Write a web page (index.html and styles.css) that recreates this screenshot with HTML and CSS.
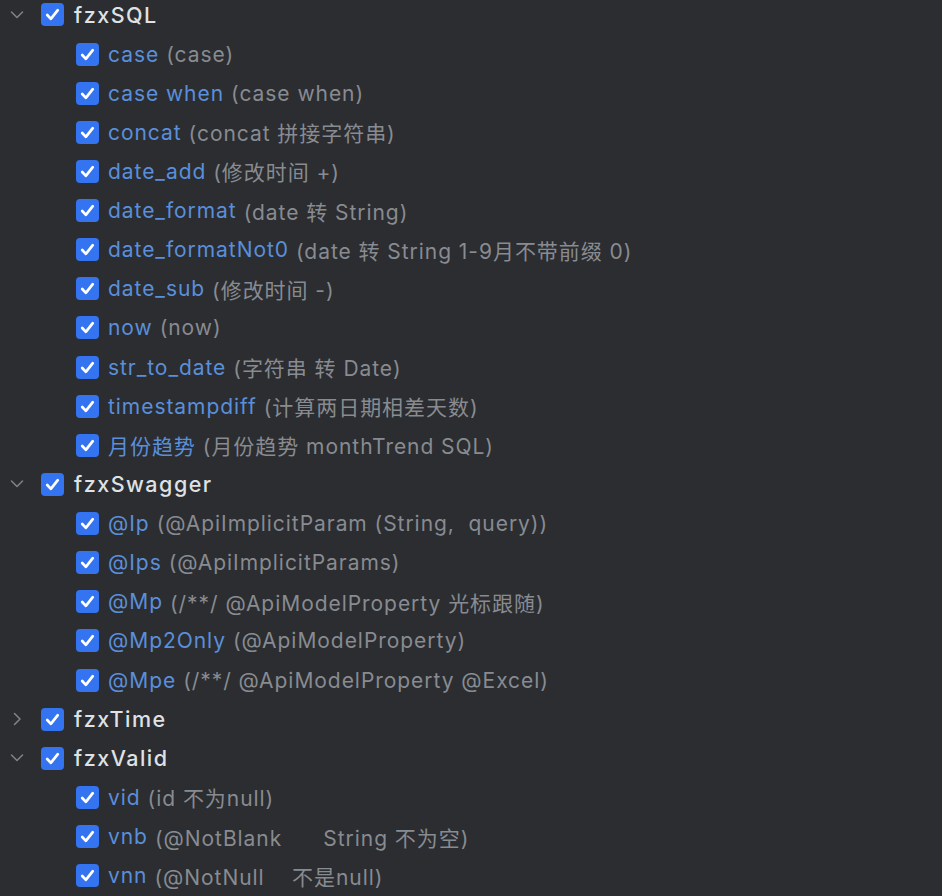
FILE: index.html
```html
<!DOCTYPE html>
<html>
<head>
<meta charset="utf-8">
<link rel="stylesheet" href="styles.css">
</head>
<body>
<div class="tree">
  <div class="row group">
    <span class="chev"><svg viewBox="0 0 14 10" width="14" height="10"><path d="M1.5 2 L7 7.5 L12.5 2" fill="none" stroke="currentColor" stroke-width="1.6" stroke-linecap="round" stroke-linejoin="round"/></svg></span>
    <span class="cb"><svg viewBox="0 0 24 24" width="24" height="24"><path d="M6.5 12.5 L10.3 16.5 L17.5 7.5" fill="none" stroke="#fff" stroke-width="2.8" stroke-linecap="round" stroke-linejoin="round"/></svg></span>
    <span class="gname">fzxSQL</span>
  </div>
  <div class="row item"><span class="cb"><svg viewBox="0 0 24 24" width="24" height="24"><path d="M6.5 12.5 L10.3 16.5 L17.5 7.5" fill="none" stroke="#fff" stroke-width="2.8" stroke-linecap="round" stroke-linejoin="round"/></svg></span><span class="name">case</span><span class="desc">(case)</span></div>
  <div class="row item"><span class="cb"><svg viewBox="0 0 24 24" width="24" height="24"><path d="M6.5 12.5 L10.3 16.5 L17.5 7.5" fill="none" stroke="#fff" stroke-width="2.8" stroke-linecap="round" stroke-linejoin="round"/></svg></span><span class="name">case when</span><span class="desc">(case when)</span></div>
  <div class="row item"><span class="cb"><svg viewBox="0 0 24 24" width="24" height="24"><path d="M6.5 12.5 L10.3 16.5 L17.5 7.5" fill="none" stroke="#fff" stroke-width="2.8" stroke-linecap="round" stroke-linejoin="round"/></svg></span><span class="name">concat</span><span class="desc">(concat 拼接字符串)</span></div>
  <div class="row item"><span class="cb"><svg viewBox="0 0 24 24" width="24" height="24"><path d="M6.5 12.5 L10.3 16.5 L17.5 7.5" fill="none" stroke="#fff" stroke-width="2.8" stroke-linecap="round" stroke-linejoin="round"/></svg></span><span class="name">date_add</span><span class="desc">(修改时间 +)</span></div>
  <div class="row item"><span class="cb"><svg viewBox="0 0 24 24" width="24" height="24"><path d="M6.5 12.5 L10.3 16.5 L17.5 7.5" fill="none" stroke="#fff" stroke-width="2.8" stroke-linecap="round" stroke-linejoin="round"/></svg></span><span class="name">date_format</span><span class="desc">(date 转 String)</span></div>
  <div class="row item"><span class="cb"><svg viewBox="0 0 24 24" width="24" height="24"><path d="M6.5 12.5 L10.3 16.5 L17.5 7.5" fill="none" stroke="#fff" stroke-width="2.8" stroke-linecap="round" stroke-linejoin="round"/></svg></span><span class="name">date_formatNot0</span><span class="desc">(date 转 String 1-9月不带前缀 0)</span></div>
  <div class="row item"><span class="cb"><svg viewBox="0 0 24 24" width="24" height="24"><path d="M6.5 12.5 L10.3 16.5 L17.5 7.5" fill="none" stroke="#fff" stroke-width="2.8" stroke-linecap="round" stroke-linejoin="round"/></svg></span><span class="name">date_sub</span><span class="desc">(修改时间 -)</span></div>
  <div class="row item"><span class="cb"><svg viewBox="0 0 24 24" width="24" height="24"><path d="M6.5 12.5 L10.3 16.5 L17.5 7.5" fill="none" stroke="#fff" stroke-width="2.8" stroke-linecap="round" stroke-linejoin="round"/></svg></span><span class="name">now</span><span class="desc">(now)</span></div>
  <div class="row item"><span class="cb"><svg viewBox="0 0 24 24" width="24" height="24"><path d="M6.5 12.5 L10.3 16.5 L17.5 7.5" fill="none" stroke="#fff" stroke-width="2.8" stroke-linecap="round" stroke-linejoin="round"/></svg></span><span class="name">str_to_date</span><span class="desc">(字符串 转 Date)</span></div>
  <div class="row item"><span class="cb"><svg viewBox="0 0 24 24" width="24" height="24"><path d="M6.5 12.5 L10.3 16.5 L17.5 7.5" fill="none" stroke="#fff" stroke-width="2.8" stroke-linecap="round" stroke-linejoin="round"/></svg></span><span class="name">timestampdiff</span><span class="desc">(计算两日期相差天数)</span></div>
  <div class="row item"><span class="cb"><svg viewBox="0 0 24 24" width="24" height="24"><path d="M6.5 12.5 L10.3 16.5 L17.5 7.5" fill="none" stroke="#fff" stroke-width="2.8" stroke-linecap="round" stroke-linejoin="round"/></svg></span><span class="name">月份趋势</span><span class="desc">(月份趋势 monthTrend SQL)</span></div>

  <div class="row group">
    <span class="chev"><svg viewBox="0 0 14 10" width="14" height="10"><path d="M1.5 2 L7 7.5 L12.5 2" fill="none" stroke="currentColor" stroke-width="1.6" stroke-linecap="round" stroke-linejoin="round"/></svg></span>
    <span class="cb"><svg viewBox="0 0 24 24" width="24" height="24"><path d="M6.5 12.5 L10.3 16.5 L17.5 7.5" fill="none" stroke="#fff" stroke-width="2.8" stroke-linecap="round" stroke-linejoin="round"/></svg></span>
    <span class="gname">fzxSwagger</span>
  </div>
  <div class="row item"><span class="cb"><svg viewBox="0 0 24 24" width="24" height="24"><path d="M6.5 12.5 L10.3 16.5 L17.5 7.5" fill="none" stroke="#fff" stroke-width="2.8" stroke-linecap="round" stroke-linejoin="round"/></svg></span><span class="name">@Ip</span><span class="desc">(@ApiImplicitParam (String,&nbsp; query))</span></div>
  <div class="row item"><span class="cb"><svg viewBox="0 0 24 24" width="24" height="24"><path d="M6.5 12.5 L10.3 16.5 L17.5 7.5" fill="none" stroke="#fff" stroke-width="2.8" stroke-linecap="round" stroke-linejoin="round"/></svg></span><span class="name">@Ips</span><span class="desc">(@ApiImplicitParams)</span></div>
  <div class="row item"><span class="cb"><svg viewBox="0 0 24 24" width="24" height="24"><path d="M6.5 12.5 L10.3 16.5 L17.5 7.5" fill="none" stroke="#fff" stroke-width="2.8" stroke-linecap="round" stroke-linejoin="round"/></svg></span><span class="name">@Mp</span><span class="desc">(/**/ @ApiModelProperty 光标跟随)</span></div>
  <div class="row item"><span class="cb"><svg viewBox="0 0 24 24" width="24" height="24"><path d="M6.5 12.5 L10.3 16.5 L17.5 7.5" fill="none" stroke="#fff" stroke-width="2.8" stroke-linecap="round" stroke-linejoin="round"/></svg></span><span class="name">@Mp2Only</span><span class="desc">(@ApiModelProperty)</span></div>
  <div class="row item"><span class="cb"><svg viewBox="0 0 24 24" width="24" height="24"><path d="M6.5 12.5 L10.3 16.5 L17.5 7.5" fill="none" stroke="#fff" stroke-width="2.8" stroke-linecap="round" stroke-linejoin="round"/></svg></span><span class="name">@Mpe</span><span class="desc">(/**/ @ApiModelProperty @Excel)</span></div>

  <div class="row group">
    <span class="chev"><svg viewBox="0 0 14 14" width="14" height="14"><path d="M4.5 1.5 L10 7 L4.5 12.5" fill="none" stroke="currentColor" stroke-width="1.6" stroke-linecap="round" stroke-linejoin="round"/></svg></span>
    <span class="cb"><svg viewBox="0 0 24 24" width="24" height="24"><path d="M6.5 12.5 L10.3 16.5 L17.5 7.5" fill="none" stroke="#fff" stroke-width="2.8" stroke-linecap="round" stroke-linejoin="round"/></svg></span>
    <span class="gname">fzxTime</span>
  </div>

  <div class="row group">
    <span class="chev"><svg viewBox="0 0 14 10" width="14" height="10"><path d="M1.5 2 L7 7.5 L12.5 2" fill="none" stroke="currentColor" stroke-width="1.6" stroke-linecap="round" stroke-linejoin="round"/></svg></span>
    <span class="cb"><svg viewBox="0 0 24 24" width="24" height="24"><path d="M6.5 12.5 L10.3 16.5 L17.5 7.5" fill="none" stroke="#fff" stroke-width="2.8" stroke-linecap="round" stroke-linejoin="round"/></svg></span>
    <span class="gname">fzxValid</span>
  </div>
  <div class="row item"><span class="cb"><svg viewBox="0 0 24 24" width="24" height="24"><path d="M6.5 12.5 L10.3 16.5 L17.5 7.5" fill="none" stroke="#fff" stroke-width="2.8" stroke-linecap="round" stroke-linejoin="round"/></svg></span><span class="name">vid</span><span class="desc">(id 不为null)</span></div>
  <div class="row item"><span class="cb"><svg viewBox="0 0 24 24" width="24" height="24"><path d="M6.5 12.5 L10.3 16.5 L17.5 7.5" fill="none" stroke="#fff" stroke-width="2.8" stroke-linecap="round" stroke-linejoin="round"/></svg></span><span class="name">vnb</span><span class="desc">(@NotBlank&nbsp;&nbsp;&nbsp;&nbsp;&nbsp; String 不为空)</span></div>
  <div class="row item"><span class="cb"><svg viewBox="0 0 24 24" width="24" height="24"><path d="M6.5 12.5 L10.3 16.5 L17.5 7.5" fill="none" stroke="#fff" stroke-width="2.8" stroke-linecap="round" stroke-linejoin="round"/></svg></span><span class="name">vnn</span><span class="desc">(@NotNull&nbsp;&nbsp;&nbsp; 不是null)</span></div>
</div>
</body>
</html>
```
FILE: styles.css
```css
html, body {
  margin: 0;
  padding: 0;
  background: #2b2d30;
  height: 100%;
  overflow: hidden;
}
.tree {
  margin-top: -4.6px;
  font-family: Inter, "Noto Sans CJK SC", sans-serif;
  font-size: 21px;
  letter-spacing: 0.95px;
}
.row {
  height: 39.14px;
  display: flex;
  align-items: center;
  white-space: nowrap;
}
.group {
  padding-left: 10px;
}
.chev {
  width: 14px;
  height: 14px;
  display: flex;
  align-items: center;
  justify-content: center;
  color: #7e8187;
  margin-right: 17px;
}
.cb {
  width: 23px;
  height: 23px;
  border-radius: 4px;
  background: #3574f0;
  display: flex;
  align-items: center;
  justify-content: center;
  flex: none;
}
.cb svg {
  width: 23px;
  height: 23px;
}
.gname {
  margin-left: 10px;
  color: #dfe1e5;
  font-weight: 500;
  font-size: 21.5px;
  letter-spacing: 1.5px;
}
.item {
  padding-left: 76px;
}
.name {
  margin-left: 9px;
  color: #5a8fdb;
}
.desc {
  margin-left: 7px;
  color: #888b91;
}
```
